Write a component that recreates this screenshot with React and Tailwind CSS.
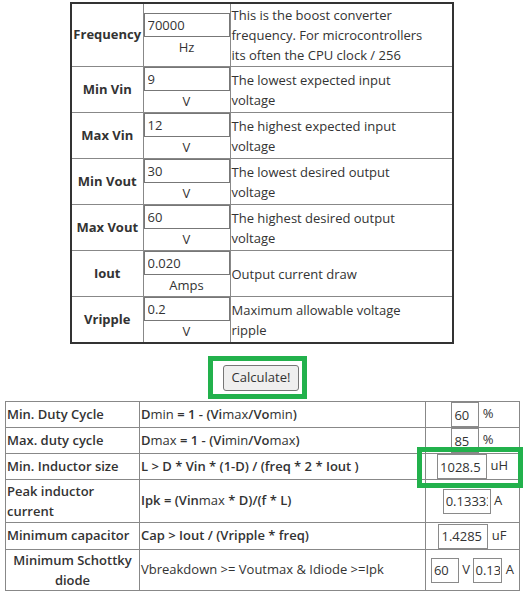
import React from 'react';

const inputs = [
    { label: 'Frequency', value: '70000', unit: 'Hz', desc: ['This is the boost converter', 'frequency. For microcontrollers', 'its often the CPU clock / 256'] },
    { label: 'Min Vin', value: '9', unit: 'V', desc: ['The lowest expected input', 'voltage'] },
    { label: 'Max Vin', value: '12', unit: 'V', desc: ['The highest expected input', 'voltage'] },
    { label: 'Min Vout', value: '30', unit: 'V', desc: ['The lowest desired output', 'voltage'] },
    { label: 'Max Vout', value: '60', unit: 'V', desc: ['The highest desired output', 'voltage'] },
    { label: 'Iout', value: '0.020', unit: 'Amps', desc: ['Output current draw'] },
    { label: 'Vripple', value: '0.2', unit: 'V', desc: ['Maximum allowable voltage', 'ripple'] },
];

const B = ({ children }) => <span className="font-semibold">{children}</span>;

const Box = ({ value, w, pad = 'px-[2px]' }) => (
    <input
        readOnly
        value={value}
        className={`${w} ${pad} h-[25px] border border-[#8a8a8a] text-[13px] text-[#333] align-middle outline-none`}
    />
);

const App = () => {
    return (
        <div className="w-[527px] h-[592px] bg-white pt-[2px] text-[13px] text-[#333]" style={{ fontFamily: '"Open Sans", sans-serif' }}>
            {/* Inputs */}
            <table className="ml-[70px] w-[382px] table-fixed border-collapse border-2 border-[#333]">
                <colgroup>
                    <col className="w-[72px]" />
                    <col className="w-[87px]" />
                    <col className="w-[223px]" />
                </colgroup>
                <tbody>
                    {inputs.map(row => (
                        <tr key={row.label}>
                            <td className="border border-[#888] p-[1px] text-center align-middle font-bold">{row.label}</td>
                            <td className="border border-[#888] p-0 align-middle">
                                <input
                                    readOnly
                                    value={row.value}
                                    className="block w-full h-[24px] border border-[#777] px-[3px] text-[13px] text-[#333] outline-none"
                                />
                                <div className="text-center leading-[21px]">{row.unit}</div>
                            </td>
                            <td className="border border-[#888] px-[1px] py-[1px] align-middle leading-[20px]">
                                {row.desc.map((line, i) => (
                                    <div key={i} className="whitespace-nowrap">{line}</div>
                                ))}
                            </td>
                        </tr>
                    ))}
                </tbody>
            </table>

            {/* Calculate */}
            <div className="relative h-[57px] pt-[21px] pl-[223px]">
                <button className="h-[26px] w-[76px] bg-[#efefef] border border-[#767676] rounded-[3px] text-[13px] text-[#333]">
                    Calculate!
                </button>
                <div className="absolute left-[208px] top-[12px] w-[99px] h-[43px] border-[5px] border-[#22b14c]" />
            </div>

            {/* Results */}
            <div className="relative">
                <table className="ml-[5px] w-[514px] table-fixed border-collapse border border-[#888]">
                    <colgroup>
                        <col className="w-[134px]" />
                        <col className="w-[286px]" />
                        <col className="w-[94px]" />
                    </colgroup>
                    <tbody>
                        <tr className="h-[26px]">
                            <td className="border border-[#888] px-[1px] font-semibold">Min. Duty Cycle</td>
                            <td className="border border-[#888] px-[1px]"><B>D</B>min <B>= 1 - (Vi</B>max<B>/Vo</B>min<B>)</B></td>
                            <td className="border border-[#888] p-0 text-center whitespace-nowrap"><Box value="60" w="w-[28px]" /> %</td>
                        </tr>
                        <tr className="h-[25px]">
                            <td className="border border-[#888] px-[1px] font-semibold">Max. duty cycle</td>
                            <td className="border border-[#888] px-[1px]"><B>D</B>max <B>= 1 - (Vi</B>min<B>/Vo</B>max<B>)</B></td>
                            <td className="border border-[#888] p-0 text-center whitespace-nowrap"><Box value="85" w="w-[28px]" /> %</td>
                        </tr>
                        <tr className="h-[25px]">
                            <td className="border border-[#888] px-[1px] font-semibold">Min. Inductor size</td>
                            <td className="border border-[#888] px-[1px] font-semibold">L &gt; D * Vin * (1-D) / (freq * 2 * Iout )</td>
                            <td className="border border-[#888] p-0 text-center whitespace-nowrap"><Box value="1028.5" w="w-[50px]" /> uH</td>
                        </tr>
                        <tr className="h-[43px]">
                            <td className="border border-[#888] px-[1px] font-semibold leading-[20px]">Peak inductor current</td>
                            <td className="border border-[#888] px-[1px]"><B>Ipk = (Vin</B>max <B>* D)/(f * L)</B></td>
                            <td className="border border-[#888] p-0 text-center whitespace-nowrap"><Box value="0.133333" w="w-[48px]" /> A</td>
                        </tr>
                        <tr className="h-[27px]">
                            <td className="border border-[#888] px-[1px] font-semibold whitespace-nowrap">Minimum capacitor</td>
                            <td className="border border-[#888] px-[1px] font-semibold">Cap &gt; Iout / (Vripple * freq)</td>
                            <td className="border border-[#888] p-0 text-center whitespace-nowrap"><Box value="1.4285" w="w-[50px]" /> uF</td>
                        </tr>
                        <tr className="h-[41px]">
                            <td className="border border-[#888] px-[1px] font-semibold text-center leading-[20px]">Minimum Schottky diode</td>
                            <td className="border border-[#888] px-[1px]">Vbreakdown &gt;= Voutmax &amp; Idiode &gt;=Ipk</td>
                            <td className="border border-[#888] p-0 text-center whitespace-nowrap"><Box value="60" w="w-[28px]" /> V <Box value="0.13" w="w-[29px]" pad="px-[1px]" /> A</td>
                        </tr>
                    </tbody>
                </table>
                <div className="absolute left-[417px] top-[46px] w-[106px] h-[41px] border-[5px] border-[#22b14c]" />
            </div>
        </div>
    );
};

export default App;
